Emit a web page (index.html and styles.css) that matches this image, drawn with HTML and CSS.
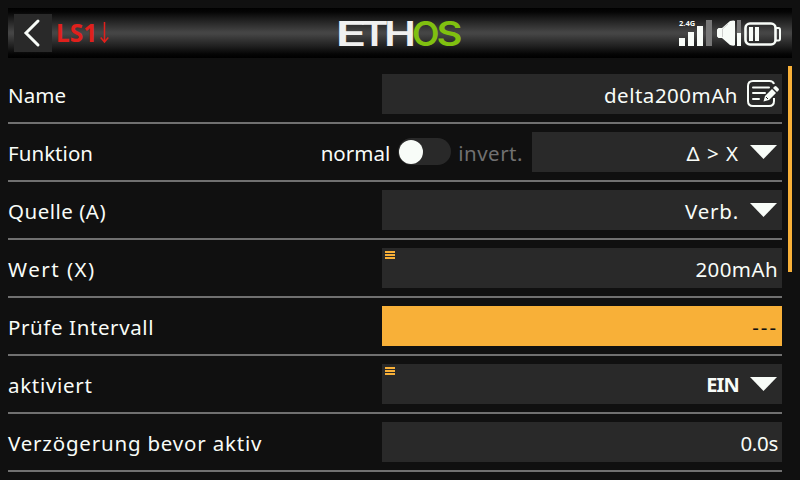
FILE: index.html
```html
<!DOCTYPE html>
<html lang="de">
<head>
<meta charset="utf-8">
<title>LS1</title>
<link rel="stylesheet" href="styles.css">
</head>
<body>
<header class="topbar">
  <button class="back" aria-label="Zurück"><svg width="38" height="38" viewBox="0 0 38 38"><path d="M24 7 12 19 24 31" fill="none" stroke="#f8fcf8" stroke-width="3" stroke-linecap="round"/></svg></button>
  <h1 class="title">LS1<svg class="arrow" width="9" height="22" viewBox="0 0 9 22"><path d="M4.500 0V20.500M.7 15.500 4.500 20 8.300 15.500" fill="none" stroke="#e0201c" stroke-width="1.500"/></svg></h1>
  <svg class="logo" width="124" height="30" viewBox="0 0 124 30">
    <g class="logo-white">
      <text x="-1.500" y="27.500" textLength="31" lengthAdjust="spacingAndGlyphs">E</text>
      <text x="23.500" y="27.500" textLength="28" lengthAdjust="spacingAndGlyphs">T</text>
      <text x="47" y="27.500" textLength="32" lengthAdjust="spacingAndGlyphs">H</text>
    </g>
    <g class="logo-green">
      <text x="75" y="27.500" textLength="27.500" lengthAdjust="spacingAndGlyphs">O</text>
      <text x="99.500" y="27.500" textLength="26" lengthAdjust="spacingAndGlyphs">S</text>
    </g>
  </svg>
  <div class="status">
    <div class="signal"><span class="band">2.4G</span><i class="s1"></i><i class="s2"></i><i class="s3"></i><i class="s4"></i></div>
    <svg class="speaker" width="18" height="26" viewBox="0 0 18 26"><path d="M0 9.500 1.500 8H5L13 1Q17 0 18 1V25Q17 26.500 13 25L5 18H1.500L0 16.500Z" fill="#f8fcf8"/><path d="M5.500 9V17M5.500 9 11 4" fill="none" stroke="#bbb" stroke-width=".7"/></svg>
    <div class="volume"></div>
    <svg class="battery" width="38" height="26" viewBox="0 0 38 26"><rect x="1.500" y="3.500" width="30" height="21" rx="4.500" fill="none" stroke="#f8fcf8" stroke-width="2.600"/><path d="M32 8H34.500Q36 8 36 10V18.500Q36 20.500 34.500 20.500H32" fill="none" stroke="#f8fcf8" stroke-width="2"/><path d="M5 7H9V21H5ZM11 7H15V21H11Z" fill="#f8fcf8"/></svg>
  </div>
</header>
<div class="content">
  <main class="form">
    <div class="row"><label class="l-name">Name</label><div class="field"><span class="v-name">delta200mAh</span><svg class="edit" width="34" height="30" viewBox="0 0 34 30"><path d="M28 5Q27 2 23.500 2H7Q2 2 2 7V22Q2 27 7 27H23Q28 27 28 22V19" fill="none" stroke="#f8fcf8" stroke-width="2"/><path d="M7 8.500H23M7 14H19M7 20H13" fill="none" stroke="#f8fcf8" stroke-width="2" stroke-linecap="round"/><path d="M17.500 22.500 19 17 26 10 30 14 23 21ZM27 9 28.500 7.500Q29.500 6.500 30.500 7.500L32.500 9.500Q33.500 10.500 32.500 11.500L31 13Z" fill="#f8fcf8"/><path d="M20 18 22 20" stroke="#292929"/></svg></div></div>
    <div class="row"><label class="l-funktion">Funktion</label><div class="switch"><span class="v-normal">normal</span><span class="toggle"></span><span class="v-invert">invert.</span></div><div class="field short"><span class="v-delta">Δ &gt; X</span><i class="caret"></i></div></div>
    <div class="row"><label class="l-quelle">Quelle (A)</label><div class="field"><span class="v-verb">Verb.</span><i class="caret"></i></div></div>
    <div class="row"><label class="l-wert">Wert (X)</label><div class="field menu"><span class="v-wert">200mAh</span></div></div>
    <div class="row"><label class="l-pruefe">Prüfe Intervall</label><div class="field active"><span class="v-dash">---</span></div></div>
    <div class="row"><label class="l-aktiviert">aktiviert</label><div class="field menu"><b class="v-ein">EIN</b><i class="caret"></i></div></div>
    <div class="row"><label class="l-verz">Verzögerung bevor aktiv</label><div class="field"><span class="v-zeit">0.0s</span></div></div>
  </main>
  <div class="scrollbar"></div>
</div>
</body>
</html>
```
FILE: styles.css
```css
* { box-sizing: border-box; }
body {
  margin: 0; padding: 8px 8px 0; width: 800px; height: 480px; overflow: hidden;
  background: #101010; color: #f8fcf8;
  font: 20.5px/40px "Noto Sans", sans-serif; white-space: nowrap;
}
.topbar {
  height: 50px; padding-left: 6px; display: flex; align-items: center;
  background: linear-gradient(#000 0, #050505 8%, #202020 24%, #454545 48%, #454545 52%, #202020 76%, #050505 92%, #000 100%);
}
.back { width: 38px; height: 38px; padding: 0; border: 0; background: #292929; flex: none; }
.back svg { display: block; }
.title { display: flex; flex: none; width: 286px; height: 40px; margin: 0; padding-left: 4px; color: #e0201c; font-size: 24.5px; font-weight: 700; }
.arrow { margin: 9px 0 0 3px; }
.logo { margin: 0 218px 0 -1px; overflow: visible; flex: none; }
.logo text { font: 600 34.500px Inter, sans-serif; }
.logo-white { fill: #f0f0f0; }
.logo-green { fill: #80c010; }
.status { display: flex; flex: none; height: 50px; padding-top: 12px; }
.signal { width: 34px; height: 26px; display: flex; align-items: flex-end; gap: 3px; position: relative; }
.signal i { width: 6px; background: #f8fcf8; }
.band { position: absolute; left: 0; top: -1px; font-size: 7.500px; line-height: 8px; font-weight: 700; }
.signal .s1 { height: 8px; } .signal .s2 { height: 14px; } .signal .s3 { height: 20px; }
.signal .s4 { height: 26px; background: #777; }
.speaker { margin-left: 4px; }
.volume { width: 4px; height: 26px; margin: 0 3px 0 2px; background: linear-gradient(#777 50%, #f8fcf8 50%); }
.content { display: flex; height: 422px; padding-top: 8px; gap: 6px; }
.form { width: 774px; }
.row { height: 58px; padding-top: 8px; display: flex; justify-content: space-between; border-bottom: 2px solid #707070; }
.row > label { padding-top: 1px; }
.field { width: 400px; height: 40px; display: flex; align-items: center; justify-content: flex-end; background: #292929; padding: 2px 4px 0 0; position: relative; }
.field.short { width: 250px; }
.field.active { background: #f8b038; color: #101010; }
.menu::before { content: ""; position: absolute; left: 3px; top: 3px; width: 10px; height: 8px; background: repeating-linear-gradient(#f8b038 0 2px, transparent 2px 3px); }
.caret { width: 27px; height: 14px; margin: -2px 1px 0 11px; background: #f8fcf8; clip-path: polygon(0 0, 100% 0, 50% 100%); }
.edit { margin: -2px -2px 0 8px; }
.switch { display: flex; margin-left: auto; padding: 1px 9px 0 0; }
.toggle { width: 53px; height: 27px; margin: 5px 7px 0 8px; border-radius: 14px; background: #292929; padding: 2px 1px; }
.toggle::before { content: ""; display: block; width: 24px; height: 24px; border-radius: 50%; background: #f8fcf8; }
.l-name { letter-spacing: .1px; }
.l-funktion { letter-spacing: .05px; }
.l-quelle { letter-spacing: .5px; }
.l-wert { letter-spacing: 1.5px; }
.l-pruefe { letter-spacing: .6px; }
.l-aktiviert { letter-spacing: .7px; }
.l-verz { letter-spacing: .8px; }
.v-invert { color: #707070; letter-spacing: .5px; }
.v-name { letter-spacing: .5px; }
.v-delta { letter-spacing: 1px; }
.v-verb { letter-spacing: .8px; }
.v-wert { letter-spacing: .4px; }
.v-dash { letter-spacing: 2px; }
.v-ein { letter-spacing: -.8px; font-size: 20px; }
.v-zeit { letter-spacing: -.3px; }
.scrollbar { width: 4px; height: 206px; background: #f8b038; }
```
